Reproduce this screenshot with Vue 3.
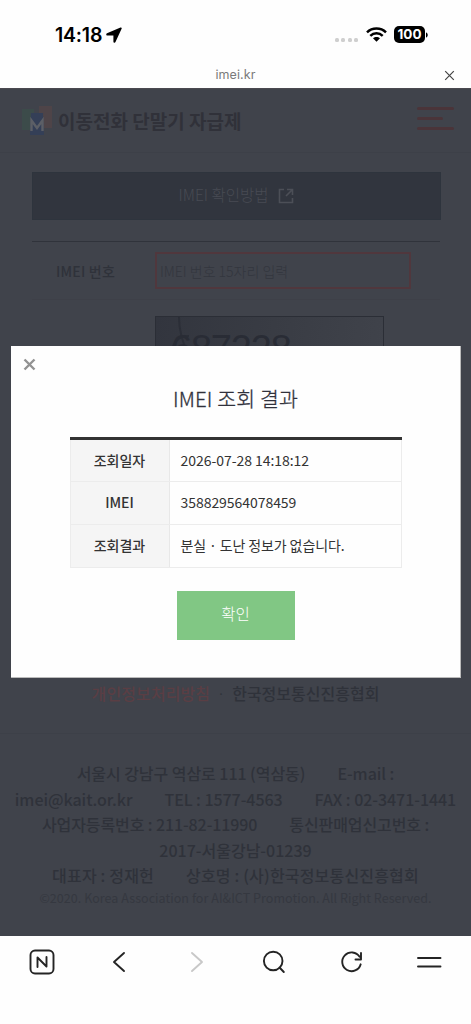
<script setup>
const rows = [
  { label: '조회일자', value: '2026-07-28 14:18:12', cls: 'date' },
  { label: 'IMEI', value: '358829564078459', cls: 'num' },
  { label: '조회결과', value: '분실 · 도난 정보가 없습니다.', cls: 'res' },
]
const footer = [
  ['서울시 강남구 역삼로 111 (역삼동)', 'E-mail :'],
  ['imei@kait.or.kr', 'TEL : 1577-4563', 'FAX : 02-3471-1441'],
  ['사업자등록번호 : 211-82-11990', '통신판매업신고번호 :'],
  ['2017-서울강남-01239'],
  ['대표자 : 정재헌', '상호명 : (사)한국정보통신진흥협회'],
]
</script>

<template>
  <div class="screen">
    <header class="status">
      <div class="clock">
        <span class="time">14:18</span>
        <svg width="16" height="16" viewBox="0 0 16 16"><path d="M14.500.5 1 6.300c-1.200.6-1 2.100.4 2.100h6v6c0 1.500 1.600 1.700 2.200.4L15.700 1.600c.3-.8-.4-1.400-1.200-1.100z" /></svg>
      </div>
      <div class="signals">
        <div class="dots"><i v-for="n in 4" :key="n" /></div>
        <svg class="wifi" width="21" height="15" viewBox="0 0 21 15">
          <g fill="none" stroke="#000" stroke-width="2.500">
            <path d="M1 5.300C6.300.2 14.700.2 20 5.300" />
            <path d="M4.300 8.900c3.500-3.400 8.900-3.400 12.400 0" />
          </g>
          <path d="M7 11.300c2-1.900 5-1.900 7 0l-3.500 3.400z" />
        </svg>
        <div class="battery"><b>100</b><svg width="2" height="6" viewBox="0 0 2 6"><path d="M0 .5c2.300.5 2.300 4.500 0 5z" /></svg></div>
      </div>
    </header>
    <div class="address">
      <span>imei.kr</span>
      <svg width="11" height="11" viewBox="0 0 11 11"><path d="M1.200 1.200l8.600 8.600M9.800 1.200L1.200 9.800" stroke="#444" stroke-width="1.200" fill="none" /></svg>
    </div>

    <main class="page">
      <div class="brand">
        <svg class="logo" width="32" height="30" viewBox="0 0 32 30">
          <path d="M1 3h12v21H1z" fill="#3c4b4a" />
          <path d="M18 0h13v22H18z" fill="#4e4448" />
          <path d="M10 7h12l1 22H9z" fill="#343f57" />
          <path d="M10.500 25V14.500l5.500 7.500 5.500-7.500V25" fill="none" stroke="#5c5f66" stroke-width="2.400" />
        </svg>
        <h1>이동전화 단말기 자급제</h1>
        <div class="burger"><i /><i class="short" /><i /></div>
      </div>
      <div class="guide">
        <span>IMEI 확인방법</span>
        <svg width="16" height="16" viewBox="0 0 16 16" fill="none" stroke="#4c4f57" stroke-width="1.600"><path d="M6 1.500H1.500v13h13V10M9 1.500h5.500V7M14 2L8 8" /></svg>
      </div>
      <div class="form">
        <div class="field">
          <label>IMEI 번호</label>
          <div class="input">IMEI 번호 15자리 입력</div>
        </div>
        <div class="captcha">
          <svg width="228" height="60" viewBox="0 0 228 60">
            <path d="M23 0c0 13 3 22 8 36M16 32q4-13 17-13" fill="none" stroke="#2b2e37" stroke-width="2" />
            <text x="15" y="45">687228</text>
          </svg>
        </div>
      </div>
      <footer>
        <div class="links"><span class="privacy">개인정보처리방침</span><span class="sep">·</span><span class="org">한국정보통신진흥협회</span></div>
        <div class="info">
          <p v-for="(line, i) in footer" :key="i" :class="'l' + i"><span v-for="t in line" :key="t">{{ t }}</span></p>
          <p class="copy">©2020. Korea Association for AI&amp;ICT Promotion. All Right Reserved.</p>
        </div>
      </footer>

      <section class="modal">
        <svg class="close" width="13" height="13" viewBox="0 0 13 13"><path d="M1.500 1.500l10 10M11.500 1.500l-10 10" stroke="#929292" stroke-width="2.400" /></svg>
        <h2>IMEI 조회 결과</h2>
        <div class="table">
          <div v-for="r in rows" :key="r.label" class="row">
            <div class="th">{{ r.label }}</div>
            <div class="td"><span :class="r.cls">{{ r.value }}</span></div>
          </div>
        </div>
        <button>확인</button>
      </section>
    </main>

    <nav>
      <svg width="26" height="26" viewBox="0 0 26 26"><rect x="1.500" y="1.500" width="23" height="23" rx="4.500" /><path d="M8.500 18V8.500l9 9V8" /></svg>
      <svg width="26" height="26" viewBox="0 0 26 26"><path d="M18 4L8 13l10 9" /></svg>
      <svg class="off" width="26" height="26" viewBox="0 0 26 26"><path d="M8 4l10 9-10 9" /></svg>
      <svg width="26" height="26" viewBox="0 0 26 26"><circle cx="12.200" cy="12" r="9.300" /><path d="M18.500 18.500l4.300 4.500" /></svg>
      <svg width="26" height="26" viewBox="0 0 26 26"><path d="M21.700 15.300A9.400 9.400 0 1 1 20.600 7.800M22 4v6.500h-5.500" /></svg>
      <svg width="26" height="26" viewBox="0 0 26 26"><path d="M2 9h22.500M2 17.500h22.500" /></svg>
    </nav>
  </div>
</template>

<style>
body { margin: 0; background: #fefefe; }
</style>

<style scoped>
* { box-sizing: border-box; }
.screen { width: 471px; height: 1024px; display: flex; flex-direction: column; overflow: hidden; background: #fefefe; font-family: "Noto Sans CJK KR", sans-serif; }
h1, h2, p { margin: 0; }
span, h1, h2, label { white-space: nowrap; }
.status { height: 64px; display: flex; justify-content: space-between; padding: 24px 43px 0 55px; }
.clock { display: flex; height: 22px; align-items: center; gap: 4px; }
.time { font: 600 19.500px/22px Inter, sans-serif; letter-spacing: -.2px; }
.signals { display: flex; height: 21px; align-items: center; }
.dots { display: flex; gap: 2.500px; margin: 10px 8px 0 0; }
.dots i { width: 4px; height: 4px; border-radius: 1.500px; background: #cfcfcf; }
.wifi { margin-right: 7px; }
.battery { display: flex; align-items: center; gap: 1px; }
.battery b { width: 31px; height: 17px; border-radius: 5px; background: #000; color: #fff; font: 700 13.500px/17px Inter, sans-serif; text-align: center; }
.address { height: 24px; position: relative; text-align: center; font: 400 12.500px/22px Inter, sans-serif; color: #7a7a7a; letter-spacing: .1px; }
.address svg { position: absolute; right: 16px; top: 6px; }
.page { position: relative; height: 848px; background: #40434b; color: #2f323a; border-top: 1px solid #4a4950; display: flex; flex-direction: column; }
.brand { height: 64px; display: flex; align-items: center; padding: 0 17px 0 21px; border-bottom: 1px solid #3d4048; }
.logo { margin-right: 5px; }
h1 { font-size: 19px; font-weight: 700; line-height: 30px; padding-top: 1px; letter-spacing: 0; color: #303139; flex: 1; }
.burger { width: 37px; height: 23px; display: flex; flex-direction: column; justify-content: space-between; margin-top: -5px; }
.burger i { height: 3px; border-radius: 2px; background: #4a3439; }
.burger .short { width: 26px; }
.guide { margin: 19px 30px 0 32px; height: 48px; background: #31353e; border: 1px solid #2e343d; display: flex; align-items: center; justify-content: center; gap: 10px; color: #484b53; font-size: 15.500px; font-weight: 300; }
.guide span { line-height: 20px; margin-top: -4px; }
.form { margin: 21px 32px 0; width: 408px; border-top: 1px solid #30333b; height: 409px; }
.field { height: 58px; display: flex; align-items: center; border-bottom: 1px solid #3e4048; }
label { width: 123px; padding-left: 24px; font-size: 14px; font-weight: 500; letter-spacing: .2px; }
.input { width: 256px; height: 37px; border: 2px solid #50373d; font-size: 14px; font-weight: 300; line-height: 34px; padding-left: 3px; color: #33363e; }
.captcha { margin: 16px 0 0 123px; width: 229px; height: 70px; border: 1px solid #2b2e36; background: linear-gradient(100deg, #32353e, #393c44 50%, #40434b); }
.captcha text { font: 38px "Liberation Sans", sans-serif; letter-spacing: -1.200px; fill: #292c35; }
footer { text-align: center; }
.links { height: 83px; padding-top: 31px; display: flex; justify-content: center; font-size: 16px; line-height: 24px; font-weight: 500; }
.privacy { color: #5a3e44; letter-spacing: .1px; }
.sep { width: 22px; font-weight: 300; }
.info { border-top: 1px solid #3d4048; padding-top: 27px; font-size: 16px; font-weight: 500; line-height: 25.600px; }
.info p { display: flex; justify-content: center; gap: 32px; white-space: nowrap; }
.l0 { letter-spacing: -.05px; }
.l1 { letter-spacing: -.05px; }
.l2 { letter-spacing: -.1px; }
.l4 { letter-spacing: .18px; }
.info .copy { font: 400 12.500px/18px "Noto Sans CJK KR", sans-serif; color: #353840; letter-spacing: .05px; }
.modal { position: absolute; left: 11px; top: 257px; width: 450px; height: 332px; background: #fefefe; display: flex; flex-direction: column; align-items: center; color: #333; border-bottom: 1px solid #bbb; border-right: 1px solid #bbb; }
.close { position: absolute; left: 12px; top: 12px; }
h2 { font-size: 20.500px; line-height: 30px; margin-top: 37px; color: #30313b; font-weight: 300; letter-spacing: .15px; -webkit-text-stroke: .3px #30313b; }
.table { width: 332px; margin-top: 24px; border-top: 3px solid #333; }
.row { height: 43px; display: flex; border: 1px solid #ececec; border-top: 0; font-size: 14px; }
.row:first-child { height: 42px; }
.row:last-child { height: 42.500px; }
.th { width: 99px; background: #f5f5f5; border-right: 1px solid #e8e8e8; text-align: center; font-weight: 500; line-height: 41px; }
.td { padding-left: 11px; line-height: 41px; }
.date, .num { letter-spacing: -.05px; }
.res { letter-spacing: -.12px; }
button { width: 118px; height: 49px; margin: 23.500px 0 0; padding: 0 0 4px; border: 0; background: #81c784; color: #fff; font: 300 15.500px/45px "Noto Sans CJK KR", sans-serif; }
nav { height: 88px; padding: 13px 29px; display: flex; justify-content: space-between; align-items: flex-start; }
nav svg { fill: none; stroke: #242424; stroke-width: 1.900; stroke-linecap: round; stroke-linejoin: round; }
nav .off { stroke: #c8c8c8; }
</style>
